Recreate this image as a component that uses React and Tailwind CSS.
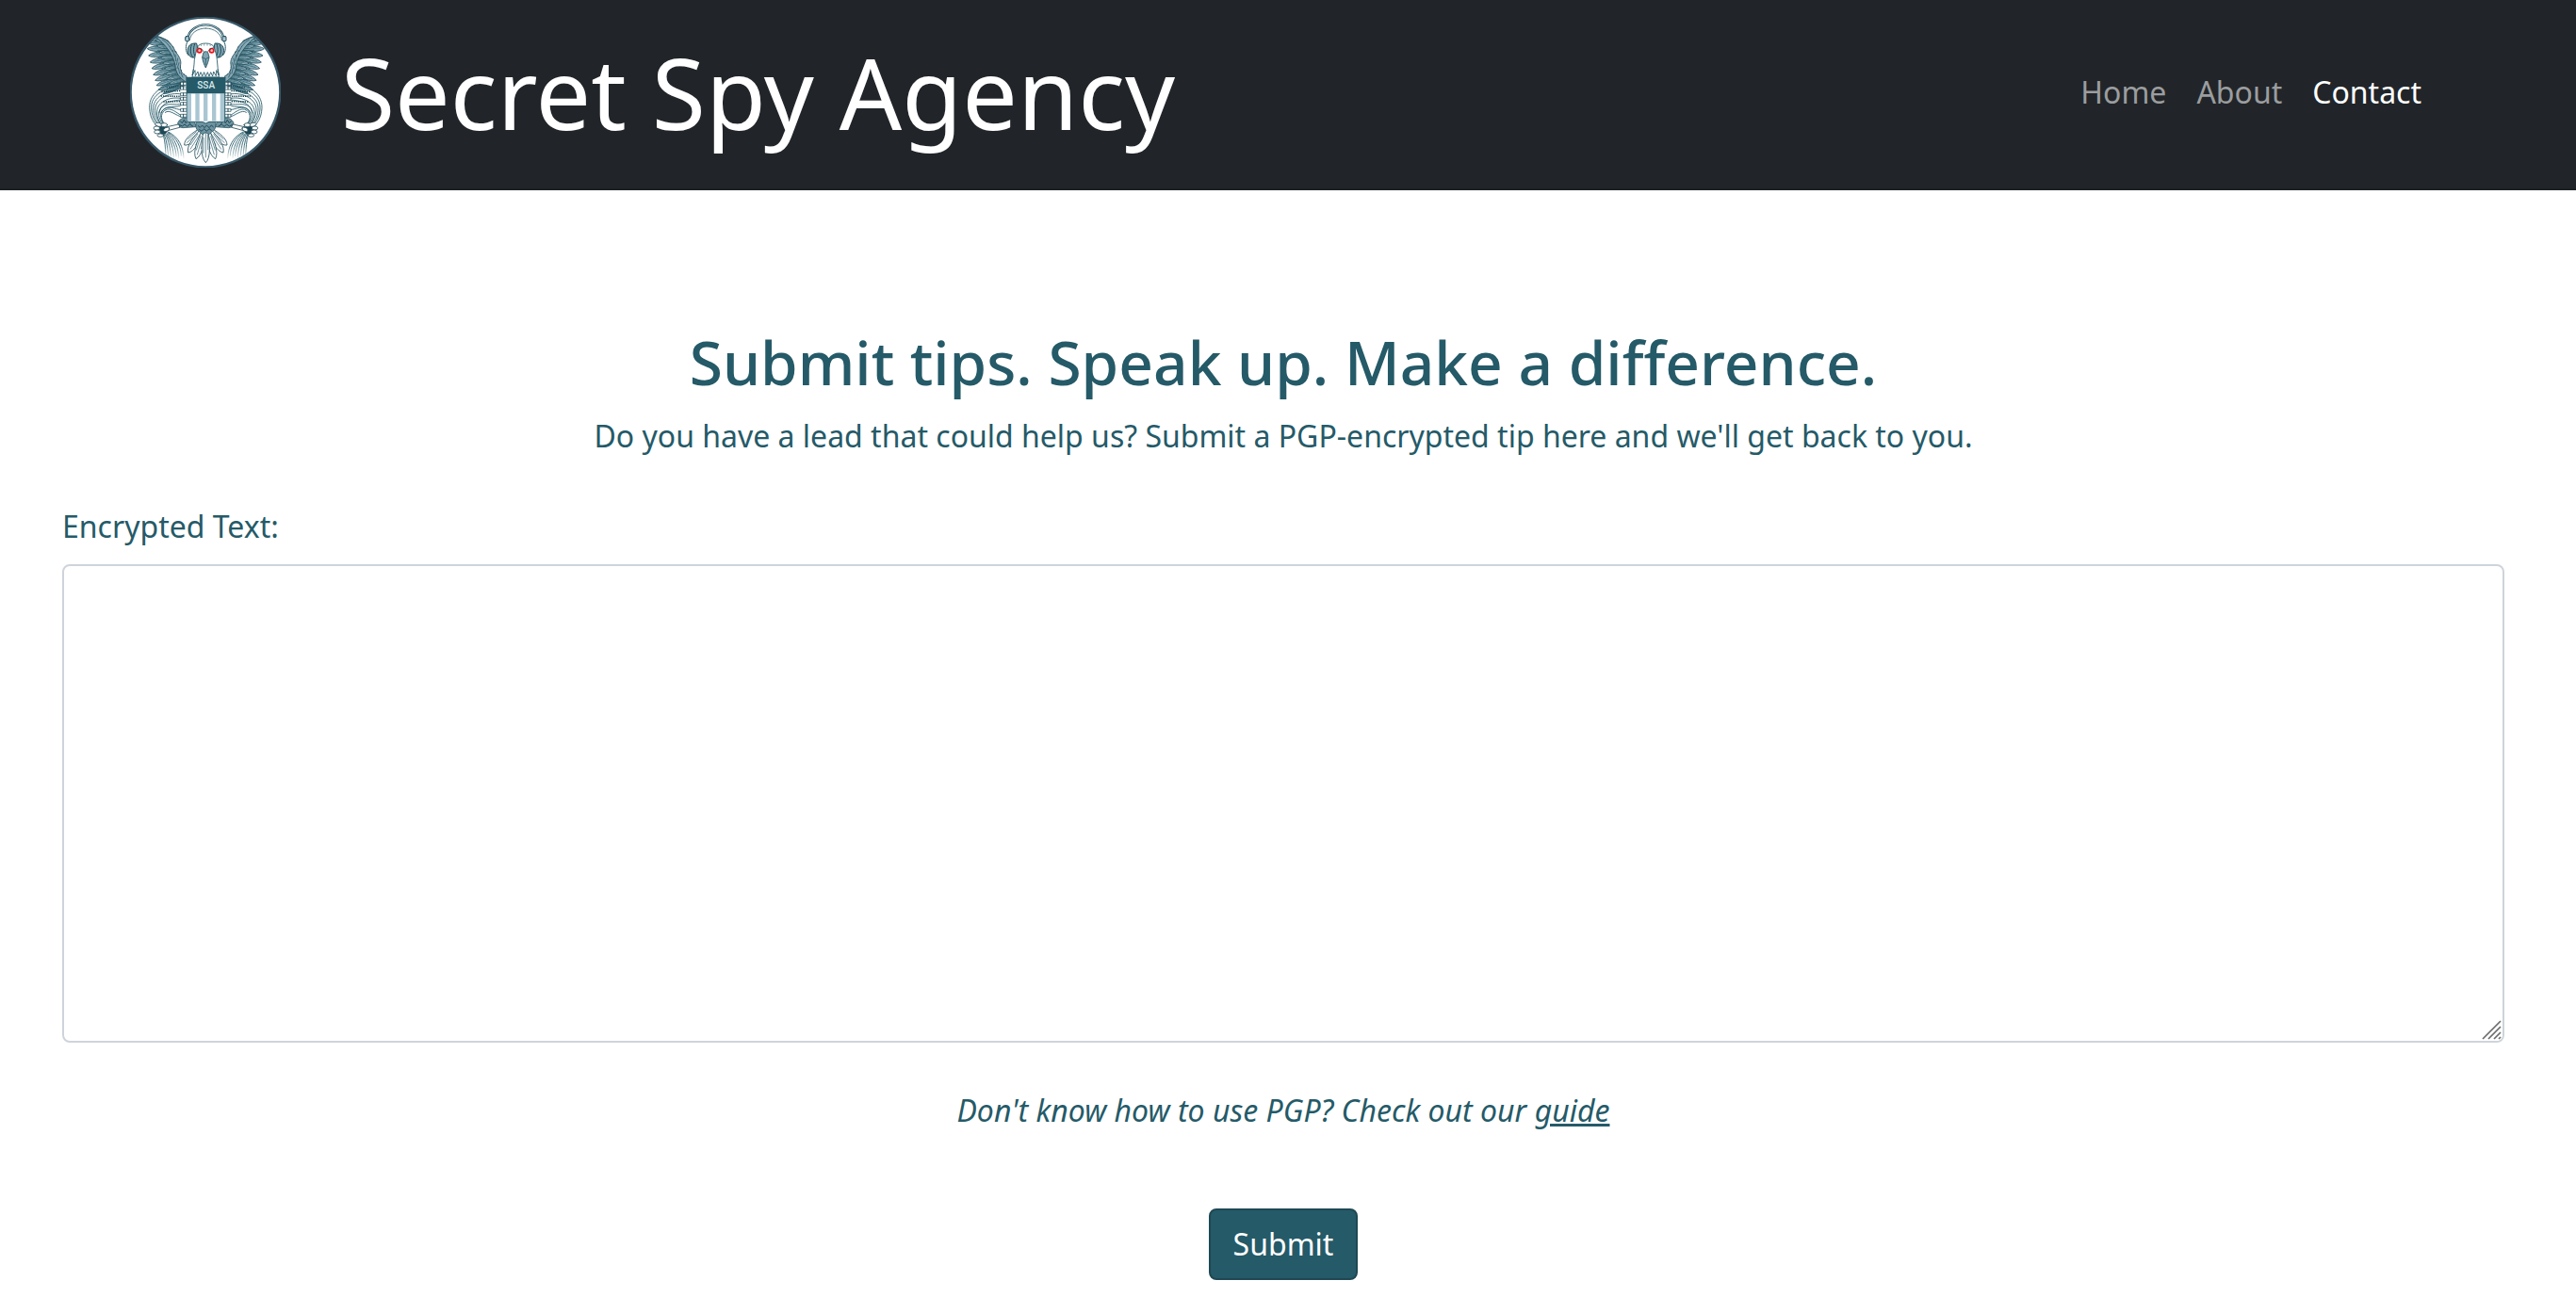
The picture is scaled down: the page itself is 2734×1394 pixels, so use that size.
const LINKS = [
  { label: "Home", href: "#home" },
  { label: "About", href: "#about" },
  { label: "Contact", href: "#contact", active: true },
];

const INK = "#255a68";
const DARK = "#1d4855";
const PALE = "#a9c6d2";

// [tip x, tip y, root x, root y, half width] from back to front
const WING_FEATHERS = [
  [130, 268, 200, 236, 8],
  [114, 256, 196, 226, 9],
  [108, 242, 190, 214, 9],
  [104, 226, 186, 198, 10],
  [98, 208, 182, 182, 10],
  [93, 188, 178, 166, 10],
  [88, 168, 174, 152, 10],
  [83, 147, 168, 138, 10],
  [79, 125, 160, 126, 10],
  [78, 104, 152, 114, 9],
  [90, 86, 144, 104, 9],
];

const COVERT_FEATHERS = [
  [150, 236, 202, 222, 7],
  [142, 222, 196, 210, 7],
  [138, 206, 186, 196, 7],
  [134, 190, 182, 182, 7],
  [128, 172, 180, 166, 7],
  [122, 154, 176, 152, 7],
  [116, 136, 170, 138, 7],
  [110, 116, 160, 122, 7],
  [106, 96, 148, 108, 7],
];

const TAIL_FEATHERS = [
  [197, 432, 250, 384, 13],
  [209, 456, 254, 386, 14],
  [234, 476, 260, 388, 14],
];

const PLUGS = [236, 250, 270, 284, 300, 320, 338];

const CABLES = [
  "M188 236 C140 232 84 262 86 314 C88 348 100 362 116 378",
  "M188 250 C140 244 88 270 92 318 C94 346 106 362 120 376",
  "M188 254 C146 256 94 276 98 322 C100 346 110 362 124 374",
  "M188 270 C150 262 102 284 104 322 C106 344 114 358 126 372",
  "M188 284 C160 276 110 290 110 326 C110 346 116 358 128 370",
  "M188 288 C166 290 122 292 116 330",
  "M188 300 C172 310 130 288 118 324 C112 344 122 356 130 368",
  "M188 304 C176 318 134 298 122 330",
  "M188 320 C166 318 148 304 130 320 C116 334 122 352 132 366",
  "M188 338 C174 332 154 308 134 322 C120 334 122 352 134 364",
  "M188 342 C172 340 150 316 136 328",
];

const FRAYS = [
  "M130 400 C136 420 136 440 138 462",
  "M133 400 C142 420 144 444 146 470",
  "M136 398 C150 420 152 446 154 466",
  "M139 398 C156 418 162 446 163 472",
  "M141 396 C162 416 170 444 171 468",
  "M143 394 C168 412 178 442 179 474",
  "M145 392 C174 410 186 438 187 466",
  "M146 390 C180 408 193 436 195 474",
];

// Leaf shape running from the root of a feather to its tip
function Feather({ feather, fill }) {
  const [tx, ty, rx, ry, w] = feather;
  const dx = tx - rx;
  const dy = ty - ry;
  const len = Math.hypot(dx, dy);
  const nx = (-dy / len) * w;
  const ny = (dx / len) * w;
  const at = (t, s) => `${rx + dx * t + nx * s} ${ry + dy * t + ny * s}`;

  return (
    <g>
      <path
        d={`M${at(0, 0.5)} C${at(0.4, 0.9)} ${at(0.8, 1.2)} ${at(1, 0)} C${at(0.85, -1.1)} ${at(0.4, -0.9)} ${at(0, -0.5)} Z`}
        fill={fill}
        stroke={DARK}
        strokeWidth="2.4"
      />
      <path
        d={`M${at(0, 0)} L${at(0.84, 0)} M${at(0.2, 0.45)} L${at(0.7, 0.5)} M${at(0.1, -0.4)} L${at(0.6, -0.5)}`}
        stroke={INK}
        strokeWidth="2"
        fill="none"
      />
    </g>
  );
}

// Left half of the seal, the right half is the same thing mirrored
function EagleHalf() {
  return (
    <g strokeLinecap="round" strokeLinejoin="round">
      {WING_FEATHERS.map((f) => (
        <Feather key={f.join()} feather={f} fill="#8fb0bd" />
      ))}
      {COVERT_FEATHERS.map((f) => (
        <Feather key={f.join()} feather={f} fill="#a4c0cb" />
      ))}
      <path
        d="M104 86 C138 90 160 110 168 134 C180 148 188 162 185 176 C182 194 190 206 204 212 L204 232 C182 220 168 200 168 178 C162 146 138 112 104 86 Z"
        fill="#86a9b6"
        stroke={DARK}
        strokeWidth="2.4"
      />
      <path
        d="M126 96 L138 104 M140 106 L150 118 M150 118 L159 134 M160 130 L166 150 M168 144 L170 164 M176 156 L172 176 M180 170 L174 188 M178 186 L182 204 M186 202 L192 216"
        stroke={DARK}
        strokeWidth="2"
      />

      {/* cables and their plugs */}
      <g fill="none">
        {CABLES.map((d) => (
          <path key={d} d={d} stroke={INK} strokeWidth="2.6" />
        ))}
      </g>
      <path
        d="M124 262 L186 259 M122 276 L186 277 M130 294 L186 293 M140 248 L186 243"
        stroke={DARK}
        strokeWidth="5"
        strokeLinecap="butt"
        strokeDasharray="4 3"
      />
      {PLUGS.map((y) => (
        <g key={y}>
          <rect x="186" y={y - 4} width="18" height="9" fill="#fff" stroke={DARK} strokeWidth="2" />
          <path d={`M194 ${y - 4} V${y + 5}`} stroke={DARK} strokeWidth="3" />
        </g>
      ))}

      {/* tail */}
      {TAIL_FEATHERS.map((f) => (
        <Feather key={f.join()} feather={f} fill="#fff" />
      ))}

      {/* leg */}
      <path
        d="M206 346 C194 342 180 350 176 362 C176 372 182 376 192 377 L236 374 L226 352 Z"
        fill="#6d929f"
        stroke={DARK}
        strokeWidth="2"
      />
      <path
        d="M184 356 L190 362 L196 352 L202 362 L208 354 L216 364 M182 368 L190 372 L198 366 L206 373 L214 366 L224 372"
        stroke={DARK}
        strokeWidth="3"
        fill="none"
      />
      <path d="M178 366 L142 374 L144 386 L182 376 Z" fill="#fff" stroke={DARK} strokeWidth="2.4" />

      {/* frayed ends */}
      <g fill="none">
        {FRAYS.map((d) => (
          <path key={d} d={d} stroke="url(#fray)" strokeWidth="2.6" />
        ))}
      </g>

      {/* claw */}
      <g fill="#fff" stroke={DARK} strokeWidth="2.4">
        <path d="M118 374 C126 366 140 368 143 377 C146 387 138 398 128 398 C118 396 112 384 118 374 Z" fill={DARK} />
        <ellipse cx="115" cy="367" rx="11" ry="6" transform="rotate(12 115 367)" />
        <ellipse cx="109" cy="378" rx="10" ry="6" />
        <ellipse cx="111" cy="390" rx="10" ry="6" />
        <ellipse cx="121" cy="401" rx="10" ry="5" />
        <ellipse cx="133" cy="368" rx="10" ry="6" />
        <ellipse cx="140" cy="382" rx="10" ry="6" transform="rotate(-24 140 382)" />
      </g>

      {/* headphones */}
      <path d="M207 102 C200 114 200 136 210 146" stroke={INK} strokeWidth="3" fill="none" />
      <path
        d="M230 108 C212 108 206 122 208 136 C210 150 222 156 232 152 C240 138 240 118 236 109 Z"
        fill="#7fa4b2"
        stroke={DARK}
        strokeWidth="3"
      />
      <path d="M220 114 C214 126 216 144 224 152 M230 110 C224 124 226 144 232 150" stroke={DARK} strokeWidth="3" fill="none" />
      <path d="M208 96 C208 70 234 49 265 49" stroke={DARK} strokeWidth="7" strokeLinecap="butt" fill="none" />
      <path d="M208 96 C208 70 234 49 265 49" stroke={PALE} strokeWidth="3" strokeLinecap="butt" fill="none" />
      <path d="M214 98 C216 76 238 60 265 60" stroke={INK} strokeWidth="2.4" fill="none" />
      <rect x="200" y="86" width="12" height="15" rx="3" fill={PALE} stroke={DARK} strokeWidth="3" />
    </g>
  );
}

function SealLogo() {
  return (
    <svg viewBox="24 24 480 480" className="size-40 shrink-0" role="img" aria-label="Secret Spy Agency seal">
      <defs>
        <linearGradient id="fray" gradientUnits="userSpaceOnUse" x1="0" y1="390" x2="0" y2="474">
          <stop offset="0" stopColor={INK} />
          <stop offset="0.5" stopColor={INK} />
          <stop offset="1" stopColor={INK} stopOpacity="0.1" />
        </linearGradient>
        <clipPath id="disc">
          <circle cx="264" cy="264" r="238" />
        </clipPath>
      </defs>
      <circle cx="264" cy="264" r="238" fill="#fff" />

      <g clipPath="url(#disc)">
        <EagleHalf />
        <g transform="translate(530 0) scale(-1 1)">
          <EagleHalf />
        </g>

        {/* middle tail feather and rump */}
        <Feather feather={[265, 488, 265, 388, 15]} fill="#fff" />
        <path
          d="M236 356 L294 356 C300 374 294 386 284 390 L276 398 L265 392 L254 398 L246 390 C236 386 230 374 236 356 Z"
          fill="#6d929f"
          stroke={DARK}
          strokeWidth="2"
        />
        <path
          d="M240 370 L247 376 L254 369 L261 377 L268 369 L276 377 L283 369 L290 375 M244 382 L252 388 L260 380 L268 388 L276 380 L284 386"
          stroke={DARK}
          strokeWidth="3"
          fill="none"
        />

        {/* head */}
        <path
          d="M239 120 C244 104 286 104 291 120 C296 134 300 146 301 160 C303 180 304 196 307 216 L222 216 C226 196 228 180 229 160 C231 146 235 134 239 120 Z"
          fill="#fff"
          stroke={INK}
          strokeWidth="2.6"
        />
        <path
          d="M226 190 L222 210 L231 194 L232 212 L240 198 L243 213 L249 200 L254 213 L260 200 L265 214 L271 200 L276 213 L281 200 L287 213 L290 198 L298 212 L299 194 L307 210 L303 190"
          stroke={INK}
          strokeWidth="2.6"
          fill="none"
        />
        <path d="M250 112 L251 117 M260 110 L260 116 M270 110 L270 116 M280 112 L279 117" stroke={INK} strokeWidth="1.6" />
        <circle cx="245" cy="131" r="6.5" fill="#f5c6c6" stroke="#f01218" strokeWidth="5" />
        <circle cx="284" cy="131" r="6.5" fill="#f5c6c6" stroke="#f01218" strokeWidth="5" />
        <path d="M236 120 L254 128 L259 136 M294 120 L276 128 L271 136" stroke={DARK} strokeWidth="2" fill="none" />
        <path
          d="M258 137 C262 133 268 133 272 137 L276 152 C274 164 270 176 265 186 C260 176 255 164 254 152 Z"
          fill="#7fa4b2"
          stroke={DARK}
          strokeWidth="2.4"
        />
        <path d="M254 152 L265 158 L276 152 M265 158 V178" stroke={DARK} strokeWidth="2" fill="none" />

        {/* shield */}
        <path
          d="M205 264 H326 V350 C326 356 322 358 316 358 H276 L265 363 L254 358 H214 C208 358 205 356 205 350 Z"
          fill="#fff"
          stroke={INK}
          strokeWidth="3"
        />
        {[206, 232, 258, 285, 311].map((x) => (
          <rect key={x} x={x} y="268" width="13" height="88" fill={PALE} />
        ))}
        <rect x="203" y="215" width="125" height="53" rx="2" fill={INK} />
        <text
          x="266"
          y="252"
          textAnchor="middle"
          fill="#dbe8ec"
          fontSize="30"
          fontWeight="500"
          fontFamily="Roboto, sans-serif"
        >
          SSA
        </text>
      </g>

      <circle cx="264" cy="264" r="238" fill="none" stroke="#37596a" strokeWidth="7" />
    </svg>
  );
}

function Navbar() {
  return (
    <header className="flex items-center justify-between bg-[#212529] border-b-2 border-[#1c1f23] pl-[138px] pr-[148px] pt-[18px] pb-[22px]">
      <a href="#home" className="flex items-center gap-16 text-white">
        <SealLogo />
        <span className="text-[104px] leading-[156px]">Secret Spy Agency</span>
      </a>
      <nav className="flex">
        {LINKS.map((link) => (
          <a
            key={link.label}
            href={link.href}
            className={link.active ? "px-4 py-4 text-white" : "px-4 py-4 text-[#9b9d9f]"}
          >
            {link.label}
          </a>
        ))}
      </nav>
    </header>
  );
}

// Large resize grip drawn over the browser's own small one
function ResizeGrip() {
  return (
    <svg
      viewBox="0 0 24 24"
      className="absolute right-[2px] bottom-[2px] size-6 rounded-br-md bg-white pointer-events-none"
      aria-hidden="true"
    >
      <path d="M3 22 L22 3 M9 22 L22 9 M15 22 L22 15 M20 22 L22 20" stroke="#6a6a6a" strokeWidth="1.7" />
    </svg>
  );
}

function TipForm() {
  return (
    <form onSubmit={(e) => e.preventDefault()} className="flex flex-col items-center">
      <div className="flex flex-col w-full gap-4">
        <label htmlFor="tip">Encrypted Text:</label>
        <div className="relative flex">
          <textarea
            id="tip"
            className="w-full h-[508px] px-6 py-3 bg-white border-2 border-[#ced4da] rounded-lg resize-y outline-none"
          />
          <ResizeGrip />
        </div>
      </div>
      <p className="mt-12 italic">
        Don't know how to use PGP? Check out our{" "}
        <a href="#guide" className="underline">
          guide
        </a>
      </p>
      <button
        type="submit"
        className="mt-20 px-6 py-3 rounded-lg border-2 border-[#1e4853] bg-[#255a68] text-white cursor-pointer"
      >
        Submit
      </button>
    </form>
  );
}

export default function App() {
  return (
    <div className="min-h-screen bg-white font-['Noto_Sans',sans-serif] text-[32px] leading-[48px] text-[#255a68]">
      <Navbar />
      <main className="pt-36 pl-[66px] pr-[76px]">
        <div className="text-center mb-12">
          <h1 className="text-[64px] leading-[77px] font-medium mb-4">
            Submit tips. Speak up. Make a difference.
          </h1>
          <p>Do you have a lead that could help us? Submit a PGP-encrypted tip here and we'll get back to you.</p>
        </div>
        <TipForm />
      </main>
    </div>
  );
}
